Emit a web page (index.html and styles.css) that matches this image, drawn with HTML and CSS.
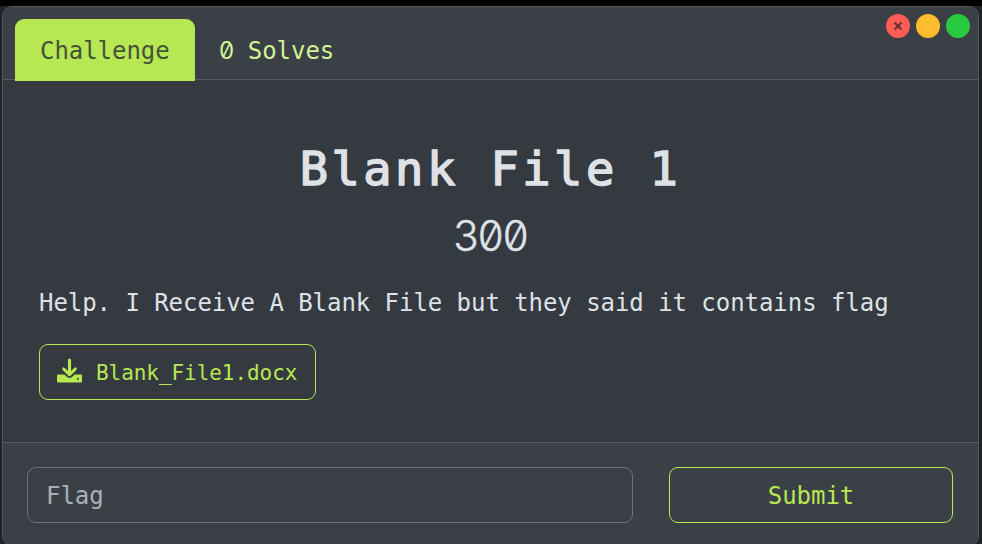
FILE: index.html
```html
<!DOCTYPE html>
<html lang="en">
<head>
<meta charset="utf-8">
<title>Blank File 1</title>
<link rel="stylesheet" href="styles.css">
</head>
<body>
<main class="modal">
  <header class="modal-header">
    <nav class="tabs">
      <a class="tab active">Challenge</a>
      <a class="tab"><span class="zero">0</span> Solves</a>
    </nav>
    <div class="controls">
      <span class="dot red"><svg width="10" height="10" viewBox="0 0 10 10"><path d="M1.5 1.5 8.5 8.5M8.5 1.5 1.5 8.5" stroke="#59343a" stroke-width="2"/></svg></span>
      <span class="dot yellow"></span>
      <span class="dot green"></span>
    </div>
  </header>
  <section class="modal-body">
    <h1 class="name">Blank File 1</h1>
    <div class="value">300</div>
    <p class="description">Help. I Receive A Blank File but they said it contains flag</p>
    <a class="file">
      <svg class="icon" width="25" height="25" viewBox="0 0 25 25"><path fill="currentColor" fill-rule="evenodd" d="M1 16.5H7.3L10.3 19.3Q12.5 20.8 14.7 19.3L17.7 16.5H24Q25 16.5 25 17.5V23.5Q25 24.5 24 24.5H1Q0 24.5 0 23.5V17.5Q0 16.5 1 16.5ZM20 20V21.7H21.7V20Z"/><path d="M12.5 2V16M6.7 11 12.5 16.6 18.3 11" fill="none" stroke="currentColor" stroke-width="3.1" stroke-linecap="round" stroke-linejoin="round"/></svg>
      <span class="file-name">Blank_File1.docx</span>
    </a>
  </section>
  <footer class="modal-footer">
    <input class="flag" type="text" placeholder="Flag">
    <button class="submit">Submit</button>
  </footer>
</main>
</body>
</html>
```
FILE: styles.css
```css
* { box-sizing: border-box; }
body {
  margin: 0;
  height: 544px;
  padding: 6px 3px 0 2px;
  overflow: hidden;
  background: linear-gradient(#000 6px, #202327 6px);
  font: 24px/36px "DejaVu Sans Mono", monospace;
  letter-spacing: -0.05px;
  color: #dee2e6;
}
.modal {
  height: 540px;
  display: flex;
  flex-direction: column;
  border: 1px solid #53585d;
  border-radius: 10px;
  background: #353940;
  overflow: hidden;
}
.modal-header {
  height: 73px;
  flex: none;
  display: flex;
  justify-content: space-between;
  padding: 12px 8px 0 12px;
  background: #3b3f46;
  border-bottom: 1px solid #565b61;
}
.tabs { display: flex; }
.tab {
  height: 62px;
  padding: 14px 24px 0;
  color: #d2f195;
  white-space: nowrap;
}
.tab.active {
  width: 180px;
  padding-left: 25px;
  border-radius: 9px 9px 0 0;
  background: #b5e853;
  color: #465237;
}
.zero {
  display: inline-block;
  width: 14.4px;
  font-family: Inter, sans-serif;
  font-feature-settings: "zero";
}
.controls { display: flex; gap: 6px; margin-top: -5px; }
.dot {
  width: 24px;
  height: 24px;
  display: flex;
  align-items: center;
  justify-content: center;
  border-radius: 50%;
}
.red { background: #ff5c54; }
.yellow { background: #ffbd2e; }
.green { background: #27c93f; }
.modal-body {
  height: 363px;
  flex: none;
  padding: 59px 36px 0;
  border-bottom: 1px solid #565b61;
}
.name {
  margin: 0;
  text-align: center;
  font-size: 47px;
  line-height: 60px;
  font-weight: 400;
  letter-spacing: 3.5px;
  -webkit-text-stroke: 1.5px currentColor;
}
.value {
  margin-top: 9px;
  text-align: center;
  font: 300 42px/56px Inter, sans-serif;
  letter-spacing: -0.9px;
  font-feature-settings: "zero";
  -webkit-text-stroke: 0.4px currentColor;
}
.description { margin: 21px 0 23px; }
.file {
  width: 277px;
  height: 56px;
  display: flex;
  align-items: center;
  gap: 14px;
  padding-left: 17px;
  border: 1px solid #b5e853;
  border-radius: 9px;
  color: #b5e853;
  font-size: 21px;
  letter-spacing: -0.06px;
}
.icon { margin-bottom: 3px; }
.file-name { padding-top: 2px; }
.modal-footer {
  flex: 1;
  display: flex;
  gap: 36px;
  padding: 24px 25px 0 24px;
  background: #3b3f46;
}
.flag, .submit {
  height: 56px;
  border-radius: 9px;
  background: transparent;
  font: inherit;
  letter-spacing: inherit;
}
.flag {
  width: 606px;
  padding: 2px 18px 0;
  border: 1px solid #6c757d;
}
.flag::placeholder { color: #a9b1b8; }
.submit {
  width: 284px;
  padding: 2px 0 0;
  border: 1px solid #b5e853;
  color: #b5e853;
}
```
